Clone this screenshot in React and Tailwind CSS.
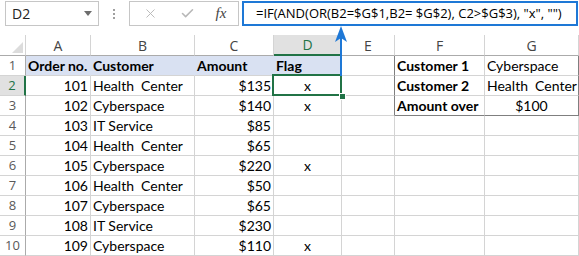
import { X, Check } from 'lucide-react';

const cellFont = { fontFamily: 'Lato, "Liberation Sans", sans-serif' };
const uiFont = { fontFamily: '"Open Sans", "Noto Sans", sans-serif' };

const data = [
  [101, 'Health  Center', '$135', 'x'],
  [102, 'Cyberspace', '$140', 'x'],
  [103, 'IT Service', '$85', ''],
  [104, 'Health  Center', '$65', ''],
  [105, 'Cyberspace', '$220', 'x'],
  [106, 'Health  Center', '$50', ''],
  [107, 'Cyberspace', '$65', ''],
  [108, 'IT Service', '$230', ''],
  [109, 'Cyberspace', '$110', 'x'],
];

const lookup = [
  ['Customer 1', 'Cyberspace', 'left'],
  ['Customer 2', 'Health  Center', 'left'],
  ['Amount over', '$100', 'center'],
];

function RowHead({ n, active }) {
  return (
    <div
      style={uiFont}
      className={`h-[20px] flex items-center justify-center text-[13px] border-b border-[#d4d4d4] ${
        active ? 'bg-[#e1e1e1] text-[#217346] border-r-2 border-r-[#217346]' : 'bg-white text-[#595959] border-r border-r-[#ababab]'
      }`}
    >
      {n}
    </div>
  );
}

function Cell({ children, className = '' }) {
  return (
    <div
      style={cellFont}
      className={`h-[20px] px-[2px] text-[14px] leading-[20px] text-black whitespace-pre overflow-hidden border-r border-b border-[#d4d4d4] ${className}`}
    >
      {children}
    </div>
  );
}

export default function App() {
  return (
    <div className="w-[579px] h-[256px] bg-white overflow-hidden relative">
      {/* formula bar */}
      <div className="h-[35px] flex items-start pt-[1px] pl-[5px]">
        <div
          style={uiFont}
          className="w-[94px] h-[25px] border border-[#c6c6c6] flex items-center justify-between pl-[6px] pr-[6px] text-[14px] text-[#222]"
        >
          <span>D2</span>
          <svg width="8" height="5" viewBox="0 0 8 5">
            <path d="M0 0 L8 0 L4 5 Z" fill="#6d6d6d" />
          </svg>
        </div>
        <div className="w-[30px] h-[25px] flex flex-col items-center justify-center gap-[2px]">
          <span className="w-[2px] h-[2px] bg-[#a0a0a0]" />
          <span className="w-[2px] h-[2px] bg-[#a0a0a0]" />
          <span className="w-[2px] h-[2px] bg-[#a0a0a0]" />
        </div>
        <div className="w-[110px] h-[25px] border border-[#c6c6c6] flex items-center">
          <div className="w-[40px] flex justify-center">
            <X size={15} strokeWidth={1.5} color="#b8b8b8" />
          </div>
          <div className="w-[34px] flex justify-center">
            <Check size={15} strokeWidth={2.5} color="#b8b8b8" />
          </div>
          <div
            className="flex-1 flex justify-center text-[15px] italic text-[#444]"
            style={{ fontFamily: '"Liberation Serif", serif' }}
          >
            fx
          </div>
        </div>
        <div
          style={uiFont}
          className="ml-[3px] w-[336px] h-[25px] border-2 border-[#1e78d6] flex items-center pl-[12px] text-[13px] text-black whitespace-pre"
        >
          =IF(AND(OR(B2=$G$1,B2= $G$2), C2&gt;$G$3), "x", "")
        </div>
      </div>

      {/* sheet */}
      <div className="grid grid-cols-[26px_65px_104px_79px_68px_53px_90px_94px]">
        {/* column headers */}
        <div className="h-[21px] border-r border-r-[#d4d4d4] border-b border-b-[#ababab] flex items-end justify-end p-[2px]">
          <svg width="11" height="11" viewBox="0 0 11 11">
            <path d="M11 0 L11 11 L0 11 Z" fill="#dcdcdc" />
          </svg>
        </div>
        {['A', 'B', 'C', 'D', 'E', 'F', 'G'].map((c) => (
          <div
            key={c}
            style={uiFont}
            className={`h-[21px] flex items-center justify-center text-[14px] border-r border-r-[#d4d4d4] ${
              c === 'D'
                ? 'bg-[#e1e1e1] text-[#217346] border-b-2 border-b-[#217346]'
                : 'text-[#444] border-b border-b-[#ababab]'
            }`}
          >
            {c}
          </div>
        ))}

        {/* row 1 */}
        <RowHead n={1} />
        <Cell className="font-bold bg-[#d9e1f2] border-r-[#d9e1f2]">Order no.</Cell>
        <Cell className="font-bold bg-[#d9e1f2] border-r-[#d9e1f2]">Customer</Cell>
        <Cell className="font-bold bg-[#d9e1f2] border-r-[#d9e1f2]">Amount</Cell>
        <Cell className="font-bold bg-[#d9e1f2]">Flag</Cell>
        <Cell className="border-r-[#7f7f7f]" />
        <Cell className="font-bold">{lookup[0][0]}</Cell>
        <Cell className="border-r-[#7f7f7f]">{lookup[0][1]}</Cell>

        {data.map((r, i) => {
          const n = i + 2;
          const lk = lookup[i + 1];
          return [
            <RowHead key={`h${n}`} n={n} active={n === 2} />,
            <Cell key={`a${n}`} className="text-right">{r[0]}</Cell>,
            <Cell key={`b${n}`}>{r[1]}</Cell>,
            <Cell key={`c${n}`} className="text-right">{r[2]}</Cell>,
            <Cell key={`d${n}`} className="text-center">{r[3]}</Cell>,
            <Cell key={`e${n}`} className={lk ? 'border-r-[#7f7f7f]' : ''} />,
            <Cell key={`f${n}`} className={`font-bold ${n === 3 ? 'border-b-[#7f7f7f]' : ''}`}>
              {lk ? lk[0] : ''}
            </Cell>,
            <Cell
              key={`g${n}`}
              className={`${lk ? 'border-r-[#7f7f7f]' : ''} ${n === 3 ? 'border-b-[#7f7f7f] text-center' : ''}`}
            >
              {lk ? lk[1] : ''}
            </Cell>,
          ];
        })}
      </div>

      {/* selected cell D2 */}
      <div className="absolute left-[272px] top-[74px] w-[70px] h-[22px] border-2 border-[#217346] pointer-events-none" />
      <div className="absolute left-[339px] top-[93px] w-[5px] h-[5px] bg-[#217346] border border-white box-content" />

      {/* arrow */}
      <svg className="absolute left-[334px] top-[25px]" width="14" height="52" viewBox="0 0 14 52">
        <line x1="7" y1="6" x2="7" y2="51" stroke="#1e78d6" strokeWidth="2" />
        <path d="M7 1 L13 17 L7 13 L1 17 Z" fill="#1e78d6" />
      </svg>
    </div>
  );
}
